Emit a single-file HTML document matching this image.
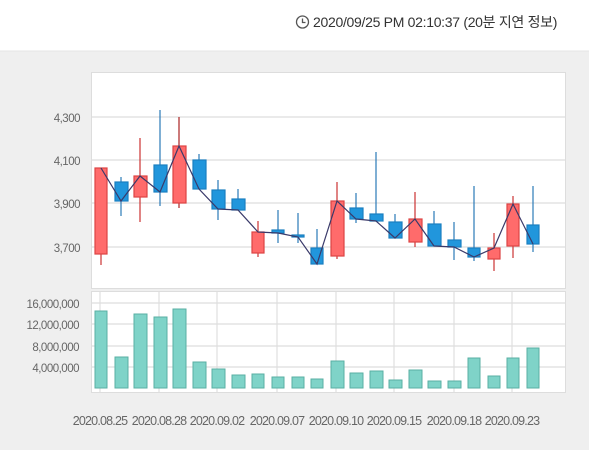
<!DOCTYPE html>
<html><head><meta charset="utf-8"><style>
html,body{margin:0;padding:0;background:#fff;width:600px;height:450px;overflow:hidden;font-family:"Liberation Sans","Noto Sans CJK KR",sans-serif}
</style></head><body>
<svg width="600" height="450" xmlns="http://www.w3.org/2000/svg" style="position:absolute;left:0;top:0">
<rect x="0" y="0" width="600" height="450" fill="#fff"/>
<rect x="0" y="51" width="589" height="399" fill="#efefef"/>
<line x1="0" y1="51" x2="589" y2="51" stroke="#e4e4e4"/>
<circle cx="302.5" cy="22" r="6" fill="none" stroke="#555" stroke-width="1.3"/>
<path d="M302.5 18.5V22.5H305.5" fill="none" stroke="#555" stroke-width="1.3"/>
<text x="313" y="27" font-size="14" fill="#333" letter-spacing="-0.3">2020/09/25 PM 02:10:37 (20분 지연 정보)</text>
<rect x="91.5" y="72.5" width="474" height="216" fill="#fff" stroke="#ddd"/>
<g stroke="#dedede" stroke-width="1.2">
<line x1="92" y1="117" x2="565" y2="117"/><line x1="92" y1="160" x2="565" y2="160"/>
<line x1="92" y1="203" x2="565" y2="203"/><line x1="92" y1="247" x2="565" y2="247"/>
</g>
<g font-size="11.5" fill="#666" text-anchor="end" letter-spacing="-0.5">
<text x="80" y="122">4,300</text><text x="80" y="165">4,100</text><text x="80" y="208">3,900</text><text x="80" y="252">3,700</text>
</g>
<g stroke-width="1.2">
<line x1="101" y1="168" x2="101" y2="265" stroke="#c33"/><rect x="95" y="168" width="12" height="86" fill="#ff6b6b" stroke="#d44"/>
<line x1="121" y1="177" x2="121" y2="216" stroke="#2a7ab8"/><rect x="115" y="182" width="13" height="19" fill="#2196dc" stroke="#1a7fc0"/>
<line x1="140" y1="138" x2="140" y2="222" stroke="#c33"/><rect x="134" y="176" width="13" height="21" fill="#ff6b6b" stroke="#d44"/>
<line x1="160" y1="110" x2="160" y2="206" stroke="#2a7ab8"/><rect x="154" y="165" width="13" height="27" fill="#2196dc" stroke="#1a7fc0"/>
<line x1="179" y1="117" x2="179" y2="208" stroke="#a22"/><rect x="173" y="146" width="13" height="57" fill="#ff6b6b" stroke="#d44"/>
<line x1="199" y1="154" x2="199" y2="189" stroke="#2a7ab8"/><rect x="193" y="160" width="13" height="29" fill="#2196dc" stroke="#1a7fc0"/>
<line x1="218" y1="180" x2="218" y2="220" stroke="#2a7ab8"/><rect x="212" y="190" width="13" height="19" fill="#2196dc" stroke="#1a7fc0"/>
<line x1="238" y1="189" x2="238" y2="210" stroke="#2a7ab8"/><rect x="232" y="199" width="13" height="11" fill="#2196dc" stroke="#1a7fc0"/>
<line x1="258" y1="221" x2="258" y2="257" stroke="#c33"/><rect x="252" y="232" width="12" height="21" fill="#ff6b6b" stroke="#d44"/>
<line x1="278" y1="210" x2="278" y2="243" stroke="#2a7ab8"/><rect x="272" y="230" width="12" height="3" fill="#2196dc" stroke="#1a7fc0"/>
<line x1="298" y1="213" x2="298" y2="243" stroke="#2a7ab8"/><rect x="292" y="235" width="12" height="2" fill="#2196dc" stroke="#1a7fc0"/>
<line x1="317" y1="229" x2="317" y2="264" stroke="#2a7ab8"/><rect x="311" y="248" width="12" height="16" fill="#2196dc" stroke="#1a7fc0"/>
<line x1="337" y1="182" x2="337" y2="259" stroke="#c33"/><rect x="331" y="201" width="13" height="55" fill="#ff6b6b" stroke="#d44"/>
<line x1="356" y1="193" x2="356" y2="223" stroke="#2a7ab8"/><rect x="350" y="208" width="13" height="11" fill="#2196dc" stroke="#1a7fc0"/>
<line x1="376" y1="152" x2="376" y2="221" stroke="#2a7ab8"/><rect x="370" y="214" width="13" height="7" fill="#2196dc" stroke="#1a7fc0"/>
<line x1="395" y1="214" x2="395" y2="238" stroke="#2a7ab8"/><rect x="389" y="222" width="13" height="16" fill="#2196dc" stroke="#1a7fc0"/>
<line x1="415" y1="192" x2="415" y2="247" stroke="#c33"/><rect x="409" y="219" width="13" height="23" fill="#ff6b6b" stroke="#d44"/>
<line x1="434" y1="211" x2="434" y2="246" stroke="#2a7ab8"/><rect x="428" y="224" width="13" height="22" fill="#2196dc" stroke="#1a7fc0"/>
<line x1="454" y1="222" x2="454" y2="260" stroke="#2a7ab8"/><rect x="448" y="240" width="13" height="7" fill="#2196dc" stroke="#1a7fc0"/>
<line x1="474" y1="186" x2="474" y2="261" stroke="#2a7ab8"/><rect x="468" y="248" width="12" height="9" fill="#2196dc" stroke="#1a7fc0"/>
<line x1="494" y1="233" x2="494" y2="271" stroke="#c33"/><rect x="488" y="248" width="12" height="11" fill="#ff6b6b" stroke="#d44"/>
<line x1="513" y1="196" x2="513" y2="258" stroke="#c33"/><rect x="507" y="204" width="12" height="42" fill="#ff6b6b" stroke="#d44"/>
<line x1="533" y1="186" x2="533" y2="252" stroke="#2a7ab8"/><rect x="527" y="225" width="12" height="19" fill="#2196dc" stroke="#1a7fc0"/>
</g>
<polyline fill="none" stroke="#3a3a6a" stroke-width="1.2" points="101,168 121,201 140,176 160,192 179,146 199,189 218,209 238,210 258,232 278,233 298,237 317,264 337,201 356,219 376,221 395,238 415,219 434,246 454,247 474,257 494,248 513,204 533,244"/>
<rect x="91.5" y="291.5" width="474" height="101" fill="#fff" stroke="#ddd"/>
<g stroke="#dedede" stroke-width="1.2">
<line x1="92" y1="303" x2="565" y2="303"/><line x1="92" y1="324" x2="565" y2="324"/>
<line x1="92" y1="346" x2="565" y2="346"/><line x1="92" y1="367" x2="565" y2="367"/>
<line x1="100" y1="292" x2="100" y2="392"/><line x1="159" y1="292" x2="159" y2="392"/>
<line x1="217" y1="292" x2="217" y2="392"/><line x1="277" y1="292" x2="277" y2="392"/>
<line x1="336" y1="292" x2="336" y2="392"/><line x1="394" y1="292" x2="394" y2="392"/>
<line x1="454" y1="292" x2="454" y2="392"/><line x1="512" y1="292" x2="512" y2="392"/>
</g>
<g font-size="11.5" fill="#666" text-anchor="end" letter-spacing="-0.5">
<text x="79" y="308">16,000,000</text><text x="79" y="329">12,000,000</text><text x="79" y="351">8,000,000</text><text x="79" y="372">4,000,000</text>
</g>
<g fill="#7fd3c8" stroke="#5aafa3" stroke-width="1">
<rect x="95" y="311" width="12" height="77"/><rect x="115" y="357" width="13" height="31"/>
<rect x="134" y="314" width="13" height="74"/><rect x="154" y="317" width="13" height="71"/>
<rect x="173" y="309" width="13" height="79"/><rect x="193" y="362" width="13" height="26"/>
<rect x="212" y="369" width="13" height="19"/><rect x="232" y="375" width="13" height="13"/>
<rect x="252" y="374" width="12" height="14"/><rect x="272" y="377" width="12" height="11"/>
<rect x="292" y="377" width="12" height="11"/><rect x="311" y="379" width="12" height="9"/>
<rect x="331" y="361" width="13" height="27"/><rect x="350" y="373" width="13" height="15"/>
<rect x="370" y="371" width="13" height="17"/><rect x="389" y="380" width="13" height="8"/>
<rect x="409" y="370" width="13" height="18"/><rect x="428" y="381" width="13" height="7"/>
<rect x="448" y="381" width="13" height="7"/><rect x="468" y="358" width="12" height="30"/>
<rect x="488" y="376" width="12" height="12"/><rect x="507" y="358" width="12" height="30"/>
<rect x="527" y="348" width="12" height="40"/>
</g>
<g font-size="12.5" fill="#666" text-anchor="middle" letter-spacing="-0.8">
<text x="100" y="425">2020.08.25</text><text x="159" y="425">2020.08.28</text>
<text x="217" y="425">2020.09.02</text><text x="277" y="425">2020.09.07</text>
<text x="336" y="425">2020.09.10</text><text x="394" y="425">2020.09.15</text>
<text x="454" y="425">2020.09.18</text><text x="512" y="425">2020.09.23</text>
</g>
</svg>
</body></html>
